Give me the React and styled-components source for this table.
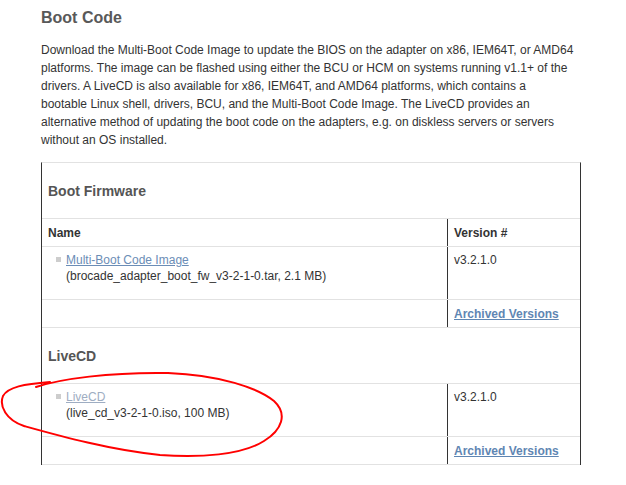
import React from 'react';
import styled, { createGlobalStyle } from 'styled-components';

const GlobalStyle = createGlobalStyle`
  html, body {
    margin: 0;
    padding: 0;
    background: #fff;
  }
  body {
    font-family: "Liberation Sans", Arial, sans-serif;
    color: #333;
  }
`;

const introLines = [
  'Download the Multi-Boot Code Image to update the BIOS on the adapter on x86, IEM64T, or AMD64',
  'platforms. The image can be flashed using either the BCU or HCM on systems running v1.1+ of the',
  'drivers. A LiveCD is also available for x86, IEM64T, and AMD64 platforms, which contains a',
  'bootable Linux shell, drivers, BCU, and the Multi-Boot Code Image. The LiveCD provides an',
  'alternative method of updating the boot code on the adapters, e.g. on diskless servers or servers',
  'without an OS installed.',
];

const sections = [
  {
    title: 'Boot Firmware',
    showHead: true,
    name: 'Multi-Boot Code Image',
    file: '(brocade_adapter_boot_fw_v3-2-1-0.tar, 2.1 MB)',
    version: 'v3.2.1.0',
    visited: false,
  },
  {
    title: 'LiveCD',
    showHead: false,
    name: 'LiveCD',
    file: '(live_cd_v3-2-1-0.iso, 100 MB)',
    version: 'v3.2.1.0',
    visited: true,
  },
];

const S = {
  Page: styled.div`
    position: relative;
    width: 626px;
    min-height: 485px;
    box-sizing: border-box;
    padding: 8px 0 0 41px;
  `,
  Title: styled.h2`
    margin: 0;
    font-size: 16px;
    line-height: 20px;
    font-weight: bold;
    color: #595959;
  `,
  Intro: styled.p`
    width: 540px;
    margin: 13px 0 0;
    font-size: 12px;
    line-height: 18px;
    color: #333;
  `,
  IntroLine: styled.span`
    display: block;
    white-space: nowrap;
  `,
  Table: styled.div`
    width: 540px;
    box-sizing: border-box;
    margin-top: 13px;
    border-top: 1px solid #e2e2e2;
    border-left: 1px solid #333;
    border-right: 1px solid #333;
  `,
  SectionHead: styled.div`
    height: 55px;
    display: flex;
    align-items: center;
    padding: 0 6px;
    border-bottom: 1px solid #e2e2e2;
    font-size: 14px;
    font-weight: bold;
    color: #555;
  `,
  Row: styled.div`
    display: grid;
    grid-template-columns: 405px 1fr;
    height: ${p => p.$h}px;
    border-bottom: 1px solid #e2e2e2;
    font-size: 12px;
  `,
  Cell: styled.div`
    display: flex;
    align-items: ${p => (p.$top ? 'flex-start' : 'center')};
    padding: ${p => (p.$top ? '5px' : '0')} 6px 0;
    line-height: 16px;
    color: #333;
    font-weight: ${p => (p.$bold ? 'bold' : 'normal')};
    ${p => p.$divider && 'border-left: 1px solid #333;'}
  `,
  Item: styled.div`
    display: flex;
    align-items: flex-start;
    padding-left: 8px;
  `,
  Bullet: styled.span`
    flex: none;
    width: 5px;
    height: 5px;
    margin: 5px 5px 0 0;
    background: #cdcdcd;
  `,
  Link: styled.a`
    color: ${p => (p.$visited ? '#9eadc2' : '#6b8db6')};
    text-decoration: underline;
    cursor: pointer;
  `,
  Archived: styled.a`
    color: #5f86b3;
    font-weight: bold;
    text-decoration: underline;
    cursor: pointer;
  `,
  Mark: styled.svg`
    position: absolute;
    top: 0;
    left: 0;
    pointer-events: none;
  `,
};

function Section({ data }) {
  return (
    <>
      <S.SectionHead>{data.title}</S.SectionHead>
      {data.showHead && (
        <S.Row $h={27}>
          <S.Cell $bold>Name</S.Cell>
          <S.Cell $bold $divider>Version #</S.Cell>
        </S.Row>
      )}
      <S.Row $h={52}>
        <S.Cell $top>
          <S.Item>
            <S.Bullet />
            <div>
              <S.Link $visited={data.visited}>{data.name}</S.Link>
              <br />
              {data.file}
            </div>
          </S.Item>
        </S.Cell>
        <S.Cell $top $divider>{data.version}</S.Cell>
      </S.Row>
      <S.Row $h={27}>
        <S.Cell />
        <S.Cell $divider>
          <S.Archived>Archived Versions</S.Archived>
        </S.Cell>
      </S.Row>
    </>
  );
}

export default function App() {
  return (
    <S.Page>
      <GlobalStyle />
      <S.Title>Boot Code</S.Title>
      <S.Intro>
        {introLines.map(line => (
          <S.IntroLine key={line}>{line}</S.IntroLine>
        ))}
      </S.Intro>
      <S.Table>
        {sections.map(s => (
          <Section key={s.title} data={s} />
        ))}
      </S.Table>
      <S.Mark width="626" height="485" viewBox="0 0 626 485">
        <path
          d="M36 387 C60 379, 110 372, 168 373 C220 375, 258 388, 274 401 C288 414, 282 430, 264 441 C242 455, 200 458, 160 455 C110 450, 60 436, 24 426 C6 420, -1 406, 3 396 C8 387, 24 384, 50 382"
          fill="none"
          stroke="#f00"
          strokeWidth="2"
          strokeLinecap="round"
        />
      </S.Mark>
    </S.Page>
  );
}
